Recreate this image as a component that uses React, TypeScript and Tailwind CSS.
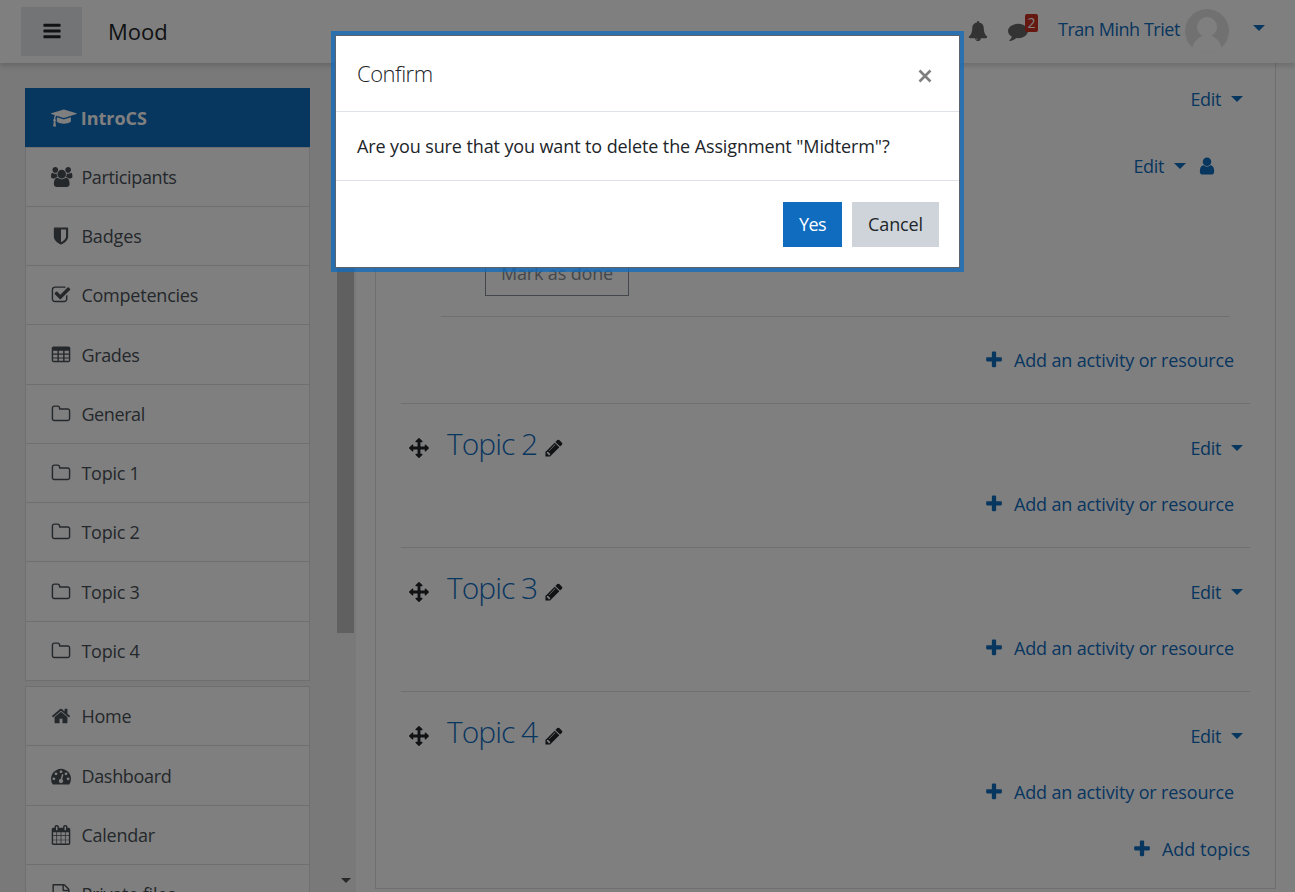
import React from "react";

const P = {
  cap: "M1774 836l18 316q4 69-82 128t-235 93.5-323 34.5-323-34.5-235-93.5-82-128l18-316 574 181q22 7 48 7t48-7zm530-324q0 23-22 31l-1120 352q-4 1-10 1t-10-1l-652-206q-43 34-71 111.5t-34 178.5q63 36 63 109 0 69-58 107l58 433q2 14-8 25-9 11-24 11h-192q-15 0-24-11-10-11-8-25l58-433q-58-38-58-107 0-73 65-111 11-207 98-330l-333-104q-22-8-22-31t22-31l1120-352q4-1 10-1t10 1l1120 352q22 8 22 31z",
  users: "M593 896q-162 5-265 128h-134q-82 0-138-40.5t-56-118.5q0-353 124-353 6 0 43.5 21t97.5 42.5 119 21.5q67 0 133-23-5 37-5 66 0 139 81 256zm1071 637q0 120-73 189.5t-194 69.5h-874q-121 0-194-69.5t-73-189.5q0-53 3.5-103.5t14-109 26.5-108.5 43-97.5 62-81 85.5-53.5 111.5-20q10 0 43 21.5t73 48 107 48 135 21.5 135-21.5 107-48 73-48 43-21.5q61 0 111.5 20t85.5 53.5 62 81 43 97.5 26.5 108.5 14 109 3.5 103.5zm-1024-1277q0 106-75 181t-181 75-181-75-75-181 75-181 181-75 181 75 75 181zm704 384q0 159-112.5 271.5t-271.5 112.5-271.5-112.5-112.5-271.5 112.5-271.5 271.5-112.5 271.5 112.5 112.5 271.5zm576 225q0 78-56 118.5t-138 40.5h-134q-103-123-265-128 81-117 81-256 0-29-5-66 66 23 133 23 59 0 119-21.5t97.5-42.5 43.5-21q124 0 124 353zm-128-609q0 106-75 181t-181 75-181-75-75-181 75-181 181-75 181 75 75 181z",
  shield: "M1344 960v-640h-448v1137q119-63 213-137 235-184 235-360zm192-768v768q0 86-33.5 170.5t-83 150-118 127.5-126.5 103-121 77.5-89.5 49.5-42.5 20q-12 6-26 6t-26-6q-16-7-42.5-20t-89.5-49.5-121-77.5-126.5-103-118-127.5-83-150-33.5-170.5v-768q0-26 19-45t45-19h1152q26 0 45 19t19 45z",
  check: "M1472 930v318q0 119-84.5 203.5t-203.5 84.5h-832q-119 0-203.5-84.5t-84.5-203.5v-832q0-119 84.5-203.5t203.5-84.5h832q63 0 117 25 15 7 18 23 3 17-9 29l-49 49q-10 10-23 10-3 0-9-2-23-6-45-6h-832q-66 0-113 47t-47 113v832q0 66 47 113t113 47h832q66 0 113-47t47-113v-254q0-13 9-22l64-64q10-10 23-10 6 0 12 3 20 8 20 29zm231-489l-814 814q-24 24-57 24t-57-24l-430-430q-24-24-24-57t24-57l110-110q24-24 57-24t57 24l263 263 647-647q24-24 57-24t57 24l110 110q24 24 24 57t-24 57z",
  table: "M224 128h1344q66 0 113 47t47 113v1088q0 66-47 113t-113 47h-1344q-66 0-113-47t-47-113v-1088q0-66 47-113t113-47zM192 512v256h384v-256zM704 512v256h384v-256zM1216 512v256h384v-256zM192 864v256h384v-256zM704 864v256h384v-256zM1216 864v256h384v-256zM192 1216v192h384v-192zM704 1216v192h384v-192zM1216 1216v192h384v-192z",
  folder: "M1600 1312v-704q0-40-28-68t-68-28h-704q-40 0-68-28t-28-68v-64q0-40-28-68t-68-28h-320q-40 0-68 28t-28 68v960q0 40 28 68t68 28h1216q40 0 68-28t28-68zm128-704v704q0 92-66 158t-158 66h-1216q-92 0-158-66t-66-158v-960q0-92 66-158t158-66h320q92 0 158 66t66 158v32h672q92 0 158 66t66 158z",
  home: "M1472 992v480q0 26-19 45t-45 19h-384v-384h-256v384h-384q-26 0-45-19t-19-45v-480q0-1 .5-3t.5-3l575-474 575 474q1 2 1 6zm223-69l-62 74q-8 9-21 11h-3q-13 0-21-7l-692-577-692 577q-12 8-24 7-13-2-21-11l-62-74q-8-10-7-23.5t11-21.5l719-599q32-26 76-26t76 26l244 204v-195q0-14 9-23t23-9h192q14 0 23 9t9 23v408l219 182q10 8 11 21.5t-7 23.5z",
  dash: "M384 1152q0-53-37.5-90.5t-90.5-37.5-90.5 37.5-37.5 90.5 37.5 90.5 90.5 37.5 90.5-37.5 37.5-90.5zm192-448q0-53-37.5-90.5t-90.5-37.5-90.5 37.5-37.5 90.5 37.5 90.5 90.5 37.5 90.5-37.5 37.5-90.5zm428 481l101-382q6-26-7.5-48.5t-38.5-29.5-48 6.5-30 39.5l-101 382q-60 5-107 43.5t-63 98.5q-20 77 20 146t117 89 146-20 89-117q16-60-6-117t-72-91zm660-33q0-53-37.5-90.5t-90.5-37.5-90.5 37.5-37.5 90.5 37.5 90.5 90.5 37.5 90.5-37.5 37.5-90.5zm-640-640q0-53-37.5-90.5t-90.5-37.5-90.5 37.5-37.5 90.5 37.5 90.5 90.5 37.5 90.5-37.5 37.5-90.5zm448 192q0-53-37.5-90.5t-90.5-37.5-90.5 37.5-37.5 90.5 37.5 90.5 90.5 37.5 90.5-37.5 37.5-90.5zm320 448q0 261-141 483-19 29-54 29h-1402q-35 0-54-29-141-221-141-483 0-182 71-348t191-286 286-191 348-71 348 71 286 191 191 286 71 348z",
  calendar: "M192 1664h288v-288h-288v288zm352 0h320v-288h-320v288zm-352-352h288v-320h-288v320zm352 0h320v-320h-320v320zm-352-384h288v-288h-288v288zm736 736h320v-288h-320v288zm-384-736h320v-288h-320v288zm768 736h288v-288h-288v288zm-384-352h320v-320h-320v320zm-352-864v-288q0-13-9.5-22.5t-22.5-9.5h-64q-13 0-22.5 9.5t-9.5 22.5v288q0 13 9.5 22.5t22.5 9.5h64q13 0 22.5-9.5t9.5-22.5zm736 864h288v-320h-288v320zm-384-384h320v-288h-320v288zm384 0h288v-288h-288v288zm32-480v-288q0-13-9.5-22.5t-22.5-9.5h-64q-13 0-22.5 9.5t-9.5 22.5v288q0 13 9.5 22.5t22.5 9.5h64q13 0 22.5-9.5t9.5-22.5zm384-64v1280q0 52-38 90t-90 38h-1408q-52 0-90-38t-38-90v-1280q0-52 38-90t90-38h128v-96q0-66 47-113t113-47h64q66 0 113 47t47 113v96h384v-96q0-66 47-113t113-47h64q66 0 113 47t47 113v96h128q52 0 90 38t38 90z",
  file: "M1596 380q28 28 48 76t20 88v1152q0 40-28 68t-68 28h-1344q-40 0-68-28t-28-68v-1600q0-40 28-68t68-28h896q40 0 88 20t76 48zm-444-244v376h376q-10-29-22-41l-313-313q-12-12-41-22zm384 1528v-1024h-416q-40 0-68-28t-28-68v-416h-768v1536h1280z",
  pencil: "M491 1536l91-91-235-235-91 91v107h128v128h107zm523-928q0-22-22-22-10 0-17 7l-542 542q-7 7-7 17 0 22 22 22 10 0 17-7l542-542q7-7 7-17zm-54-192l416 416-832 832h-416v-416zm683 96q0 53-37 90l-166 166-416-416 166-165q36-38 90-38 53 0 91 38l235 234q37 39 37 91z",
  arrows: "M1792 896q0 26-19 45l-256 256q-19 19-45 19t-45-19-19-45v-128h-384v384h128q26 0 45 19t19 45-19 45l-256 256q-19 19-45 19t-45-19l-256-256q-19-19-19-45t19-45 45-19h128v-384h-384v128q0 26-19 45t-45 19-45-19l-256-256q-19-19-19-45t19-45l256-256q19-19 45-19t45 19 19 45v128h384v-384h-128q-26 0-45-19t-19-45 19-45l256-256q19-19 45-19t45 19l256 256q19 19 19 45t-19 45-45 19h-128v384h384v-128q0-26 19-45t45-19 45 19l256 256q19 19 19 45z",
  plus: "M1600 736v192q0 40-28 68t-68 28h-416v416q0 40-28 68t-68 28h-192q-40 0-68-28t-28-68v-416h-416q-40 0-68-28t-28-68v-192q0-40 28-68t68-28h416v-416q0-40 28-68t68-28h192q40 0 68 28t28 68v416h416q40 0 68 28t28 68z",
  bars: "M1664 1344v128q0 26-19 45t-45 19h-1408q-26 0-45-19t-19-45v-128q0-26 19-45t45-19h1408q26 0 45 19t19 45zm0-512v128q0 26-19 45t-45 19h-1408q-26 0-45-19t-19-45v-128q0-26 19-45t45-19h1408q26 0 45 19t19 45zm0-512v128q0 26-19 45t-45 19h-1408q-26 0-45-19t-19-45v-128q0-26 19-45t45-19h1408q26 0 45 19t19 45z",
  bell: "M912 1696q0-16-16-16-59 0-101.5-42.5t-42.5-101.5q0-16-16-16t-16 16q0 73 51.5 124.5t124.5 51.5q16 0 16-16zm816-288q0 52-38 90t-90 38h-448q0 106-75 181t-181 75-181-75-75-181h-448q-52 0-90-38t-38-90q50-42 91-88t85-119.5 74.5-158.5 50-206 19.5-260q0-152 117-282.5t307-158.5q-8-19-8-39 0-40 28-68t68-28 68 28 28 68q0 20-8 39 190 28 307 158.5t117 282.5q0 139 19.5 260t50 206 74.5 158.5 85 119.5 91 88z",
  comment: "M1792 896q0 174-120 321.5t-326 233-450 85.5q-70 0-145-8-198 175-460 242-49 14-114 22-17 2-30.5-9t-17.5-29v-1q-3-4-.5-12t2-10 4.5-9.5l6-9 7-8.5 8-9q7-8 31-34.5t34.5-38 31-39.5 32.5-51 27-59 26-76q-157-89-247.5-220t-90.5-281q0-130 71-248.5t191-204.5 286-136.5 348-50.5q244 0 450 85.5t326 233 120 321.5z",
  user: "M1536 1399q0 109-62.5 187t-150.5 78h-854q-88 0-150.5-78t-62.5-187q0-85 8.5-160.5t31.5-152 58.5-131 94-89 134.5-34.5q131 128 313 128t313-128q76 0 134.5 34.5t94 89 58.5 131 31.5 152 8.5 160.5zm-256-887q0 159-112.5 271.5t-271.5 112.5-271.5-112.5-112.5-271.5 112.5-271.5 271.5-112.5 271.5 112.5 112.5 271.5z",
};

type IconName = keyof typeof P;

function Icon({ name, className = "" }: { name: IconName; className?: string }) {
  const w = name === "cap" ? 2304 : name === "users" ? 1920 : 1792;
  return (
    <svg viewBox={`0 0 ${w} 1792`} className={`block h-[20px] w-auto shrink-0 overflow-visible ${className}`} fill="currentColor" fillRule={name === "table" ? "evenodd" : "nonzero"}>
      <path d={P[name]} />
    </svg>
  );
}

function Caret() {
  return (
    <svg viewBox="0 0 12 6" className="h-[6px] w-[12px] shrink-0" fill="currentColor">
      <path d="M0 0h12L6 6z" />
    </svg>
  );
}

type Item = { icon: IconName; label: string; track: string };

const courseItems: Item[] = [
  { icon: "users", label: "Participants", track: "tracking-[-0.35px]" },
  { icon: "shield", label: "Badges", track: "tracking-[-0.15px]" },
  { icon: "check", label: "Competencies", track: "tracking-[-0.22px]" },
  { icon: "table", label: "Grades", track: "tracking-[-0.35px]" },
  { icon: "folder", label: "General", track: "tracking-[-0.4px]" },
  { icon: "folder", label: "Topic 1", track: "tracking-[-0.25px]" },
  { icon: "folder", label: "Topic 2", track: "tracking-[-0.25px]" },
  { icon: "folder", label: "Topic 3", track: "tracking-[-0.25px]" },
  { icon: "folder", label: "Topic 4", track: "tracking-[-0.25px]" },
];

const siteItems: Item[] = [
  { icon: "home", label: "Home", track: "tracking-[-0.2px]" },
  { icon: "dash", label: "Dashboard", track: "tracking-[-0.3px]" },
  { icon: "calendar", label: "Calendar", track: "tracking-[-0.25px]" },
  { icon: "file", label: "Private files", track: "tracking-[-0.2px]" },
];

function NavRow({ item }: { item: Item }) {
  return (
    <li className="flex h-[59.25px] items-center border-t border-black/[.125] pl-[25px] text-[#495057]">
      <span className="flex w-[30.4px] shrink-0">
        <Icon name={item.icon} />
      </span>
      <span className={item.track}>{item.label}</span>
    </li>
  );
}

function EditMenu() {
  return (
    <a className="flex items-center gap-[10px] text-[#0f6cbf]">
      <span className="tracking-[-0.35px]">Edit</span>
      <Caret />
    </a>
  );
}

function AddLink({ label, className }: { label: string; className: string }) {
  return (
    <a className="flex h-[30px] items-center gap-[10px] text-[#0f6cbf]">
      <Icon name="plus" />
      <span className={className}>{label}</span>
    </a>
  );
}

function Topic({ title }: { title: string }) {
  return (
    <li className="h-[144px] border-t border-black/[.125]">
      <div className="flex h-[88px] items-center pr-[7px] pl-[8px]">
        <Icon name="arrows" className="text-[#212529]" />
        <h3 className="ml-[18px] w-[90px] pb-[9px] text-[30px] font-light tracking-[-1px] text-[#0f6cbf]">{title}</h3>
        <Icon name="pencil" className="ml-[7px] text-[#212529]" />
        <div className="ml-auto">
          <EditMenu />
        </div>
      </div>
      <div className="-mt-[3px] flex justify-end pr-[16px]">
        <AddLink label="Add an activity or resource" className="tracking-[-0.14px]" />
      </div>
    </li>
  );
}

export default function App() {
  return (
    <div className="relative flex h-[892px] w-[1295px] flex-col overflow-hidden bg-white font-['Open_Sans','Noto_Sans',sans-serif] text-[18px] leading-[28px] whitespace-nowrap text-[#212529]">
      <header className="relative flex h-[63px] shrink-0 items-center bg-white pl-[21px] shadow-[0_3px_5px_rgba(0,0,0,.15)]">
        <button className="flex h-[49px] w-[61px] items-center justify-center bg-[#e4e8eb] pb-[2px]">
          <Icon name="bars" />
        </button>
        <span className="ml-[26px] pb-[2px] text-[22px]">Mood</span>
        <div className="ml-auto flex items-center pb-[2px]">
          <Icon name="bell" className="text-[#666]" />
          <span className="relative ml-[20px]">
            <Icon name="comment" className="text-[#666]" />
            <span className="absolute top-[-7px] left-[17px] flex h-[18px] w-[13px] items-center justify-center rounded-[2px] bg-[#ca3120] text-[14px] text-white">2</span>
          </span>
          <span className="ml-[30px] pb-[4px] tracking-[-0.45px] text-[#0f6cbf]">Tran Minh Triet</span>
          <svg viewBox="0 0 44 44" className="ml-[5px] h-[44px] w-[44px]">
            <clipPath id="face"><circle cx="22" cy="22" r="22" /></clipPath>
            <g clipPath="url(#face)">
              <path d="M0 0h44v44H0z" fill="#e3e3e3" />
              <circle cx="22" cy="18" r="10" fill="#fff" />
              <path d="M7 39Q10 30 17 27h10Q34 30 37 39V44H7z" fill="#fff" />
            </g>
          </svg>
          <span className="mr-[30px] ml-[24px] pb-[5px] text-[#0f6cbf]"><Caret /></span>
        </div>
      </header>

      <div className="flex min-h-0 flex-1">
        <aside className="flex h-full w-[356px] shrink-0 bg-[#f2f2f2] pl-[25px]">
          <nav className="h-full w-[285px] overflow-hidden pt-[25px]">
            <div className="flex h-[58.6px] items-center bg-[#0f6cbf] pt-[1px] pl-[26px] font-bold text-white">
              <Icon name="cap" />
              <span className="ml-[4px]">IntroCS</span>
            </div>
            <ul className="border-x border-b border-black/[.125] bg-white [&>li]:pt-[0.4px]">
              {courseItems.map((item) => <NavRow key={item.label} item={item} />)}
            </ul>
            <ul className="mt-[5.3px] border-x border-black/[.125] bg-white">
              {siteItems.map((item) => <NavRow key={item.label} item={item} />)}
            </ul>
          </nav>
          <div className="ml-[27px] flex w-[17px] flex-col items-center justify-between pb-[9px]">
            <div className="h-[570px] w-[17px] bg-[#c1c1c1]" />
            <svg viewBox="0 0 10 5" className="h-[5px] w-[10px]" fill="#505050"><path d="M0 0h10L5 5z" /></svg>
          </div>
        </aside>

        <main className="ml-[19px] flex h-[826px] w-[901px] flex-col border-x border-b border-black/[.125] px-[25px]">
          <div className="flex justify-end pt-[22px] pr-[7px]"><EditMenu /></div>
          <div className="flex items-center justify-end gap-[11px] pt-[39px] pr-[33px] text-[#0f6cbf]">
            <EditMenu />
            <Icon name="user" />
          </div>
          <div className="mt-[71px] ml-[84px] flex h-[45px] w-[144px] items-center justify-center border border-[#868e96] pb-[2px] tracking-[-0.15px] text-[#868e96]">
            Mark as done
          </div>
          <div className="mt-[20px] mr-[20px] ml-[40px] border-t border-black/[.125]" />
          <div className="flex h-[86px] items-center justify-end pr-[16px]">
            <AddLink label="Add an activity or resource" className="tracking-[-0.14px]" />
          </div>
          <ul>
            <Topic title="Topic 2" />
            <Topic title="Topic 3" />
            <Topic title="Topic 4" />
          </ul>
          <div className="-mt-[1px] flex justify-end"><AddLink label="Add topics" className="tracking-[0px]" /></div>
        </main>
      </div>

      <div className="absolute inset-0 flex items-start justify-center bg-black/50 pt-[36px]">
        <section className="flex h-[231px] w-[623px] flex-col bg-white shadow-[0_0_0_1px_#5b646c,0_0_0_5px_rgba(15,108,191,.75)]">
          <div className="flex h-[76px] items-center justify-between border-b border-[#dee2e6] pr-[27px] pl-[21px]">
            <h5 className="pb-[2px] text-[22px] font-light tracking-[-0.5px]">Confirm</h5>
            <svg viewBox="0 0 14 14" className="mt-[5px] h-[14px] w-[14px]" stroke="#7f7f7f" strokeWidth="2.6"><path d="M1.5 1.5l11 11M12.5 1.5l-11 11" /></svg>
          </div>
          <div className="flex h-[69px] items-center border-b border-[#dee2e6] pl-[21px] tracking-[-0.11px]">
            Are you sure that you want to delete the Assignment "Midterm"?
          </div>
          <div className="flex justify-end gap-[10px] pt-[21px] pr-[20px]">
            <button className="h-[45px] w-[59px] bg-[#0f6cbf] pb-[2px] tracking-[-0.5px] text-white">Yes</button>
            <button className="h-[45px] w-[87px] bg-[#ced4da] pb-[2px] tracking-[-0.15px]">Cancel</button>
          </div>
        </section>
      </div>
    </div>
  );
}
